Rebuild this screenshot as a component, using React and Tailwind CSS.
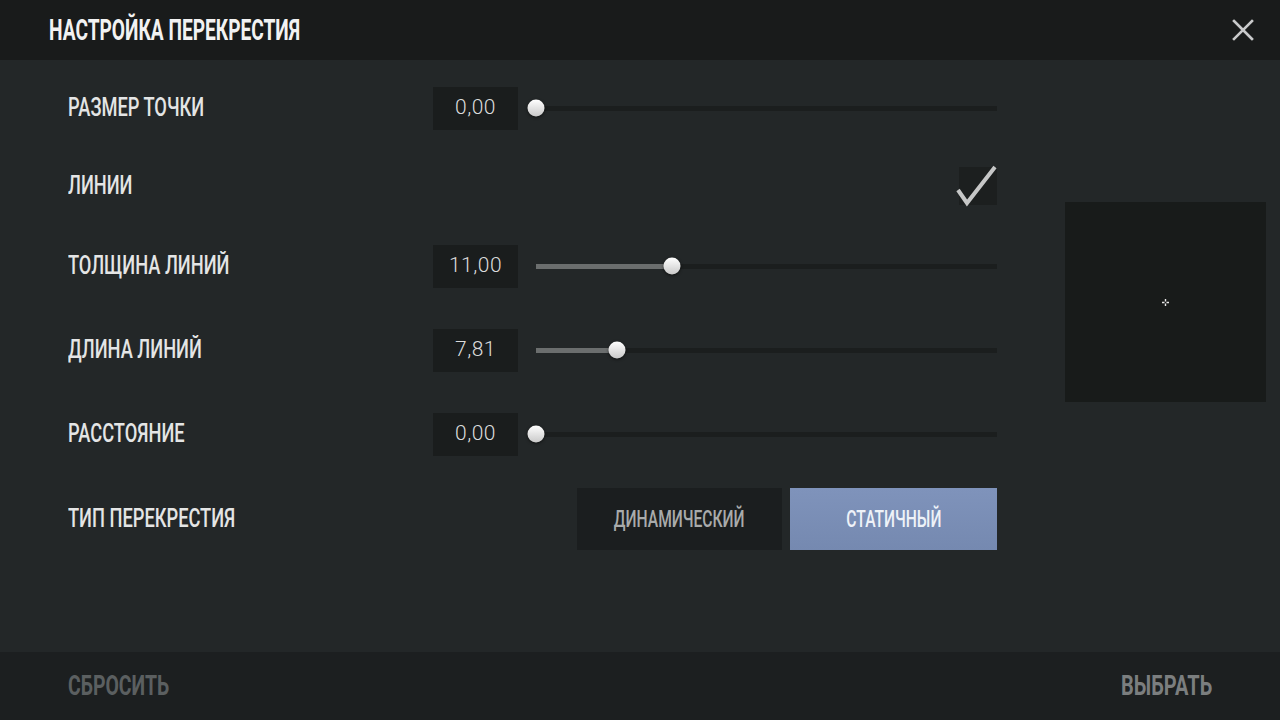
import React from 'react';

const condensed = { fontFamily: 'Roboto, "Liberation Sans", sans-serif' };
const digits = { fontFamily: 'Roboto, "DejaVu Sans", sans-serif' };

const Label = ({ children }) => (
  <span
    style={condensed}
    className="inline-block origin-left scale-x-[0.73] whitespace-nowrap text-[25px] font-medium leading-none text-[#e4e5e5]"
  >
    {children}
  </span>
);

const Slider = ({ value, percent }) => (
  <div className="flex items-center">
    <div
      style={digits}
      className="flex h-[43px] w-[85px] items-center justify-center bg-[#1a1d1d] text-[21px] font-light tracking-wide text-[#dcdcdc]"
    >
      {value}
    </div>
    <div className="relative ml-[18px] h-[5px] w-[461px] bg-[#1b1e1e]">
      <div className="h-full bg-[#6b6e6e]" style={{ width: `${percent}%` }} />
      <div
        className="absolute top-1/2 h-[17px] w-[17px] -translate-x-1/2 -translate-y-1/2 rounded-full bg-gradient-to-b from-white to-[#c9c9c9] shadow-[0_1px_3px_rgba(0,0,0,0.6)]"
        style={{ left: `${percent}%` }}
      />
    </div>
  </div>
);

const Row = ({ label, className, children }) => (
  <div className={`flex items-center ${className}`}>
    <div className="w-[365px]">
      <Label>{label}</Label>
    </div>
    <div className="flex flex-1 items-center">{children}</div>
  </div>
);

export default function App() {
  return (
    <div className="flex h-[720px] w-[1280px] flex-col overflow-hidden bg-[#232728]">
      {/* Header */}
      <div className="flex h-[60px] shrink-0 items-center justify-between bg-[#191b1b] pl-[49px] pr-[26px]">
        <span
          style={condensed}
          className="inline-block origin-left scale-x-[0.66] whitespace-nowrap text-[29px] font-bold leading-none text-[#f2f2f2]"
        >
          НАСТРОЙКА ПЕРЕКРЕСТИЯ
        </span>
        <svg width="22" height="22" viewBox="0 0 22 22">
          <path d="M2 2 L20 20 M20 2 L2 20" stroke="#c9cacb" strokeWidth="2.6" strokeLinecap="square" />
        </svg>
      </div>

      {/* Body */}
      <div className="flex flex-1">
        <div className="flex w-[997px] flex-col pl-[68px]">
          <Row label="РАЗМЕР ТОЧКИ" className="mt-[26px] h-[44px]">
            <Slider value="0,00" percent={0} />
          </Row>
          <Row label="ЛИНИИ" className="mt-[34px] h-[44px]">
            <div className="relative ml-auto h-[38px] w-[38px] bg-[#1c1f1f]">
              <svg className="absolute -right-[2px] -top-[6px]" width="44" height="46" viewBox="0 0 44 46">
                <path d="M3 29 L12 42 L40 6" fill="none" stroke="#c6c7c7" strokeWidth="4" strokeLinejoin="miter" />
              </svg>
            </div>
          </Row>
          <Row label="ТОЛЩИНА ЛИНИЙ" className="mt-[36px] h-[44px]">
            <Slider value="11,00" percent={29.5} />
          </Row>
          <Row label="ДЛИНА ЛИНИЙ" className="mt-[40px] h-[44px]">
            <Slider value="7,81" percent={17.6} />
          </Row>
          <Row label="РАССТОЯНИЕ" className="mt-[40px] h-[44px]">
            <Slider value="0,00" percent={0} />
          </Row>
          <Row label="ТИП ПЕРЕКРЕСТИЯ" className="mt-[32px] h-[62px]">
            <div className="ml-auto flex gap-[8px]">
              <div className="flex h-[62px] w-[205px] items-center justify-center bg-[#1b1e1f]">
                <span
                  style={condensed}
                  className="inline-block scale-x-[0.68] whitespace-nowrap text-[23px] font-medium leading-none text-[#a9abab]"
                >
                  ДИНАМИЧЕСКИЙ
                </span>
              </div>
              <div className="flex h-[62px] w-[207px] items-center justify-center bg-gradient-to-b from-[#7f93bb] to-[#7589b0]">
                <span
                  style={condensed}
                  className="inline-block scale-x-[0.68] whitespace-nowrap text-[23px] font-medium leading-none text-[#eef2f8]"
                >
                  СТАТИЧНЫЙ
                </span>
              </div>
            </div>
          </Row>
        </div>

        {/* Preview */}
        <div className="ml-[68px] mt-[142px] flex h-[200px] w-[201px] items-center justify-center bg-[#181b1a]">
          <svg width="7" height="7" viewBox="0 0 7 7">
            <path d="M3.5 0 V2.5 M3.5 4.5 V7 M0 3.5 H2.5 M4.5 3.5 H7" stroke="#e8e8e8" strokeWidth="1.4" />
          </svg>
        </div>
      </div>

      {/* Footer */}
      <div className="flex h-[68px] shrink-0 items-center justify-between bg-[#1c1f20] pl-[68px] pr-[68px]">
        <span
          style={condensed}
          className="inline-block origin-left scale-x-[0.72] whitespace-nowrap text-[27px] font-bold leading-none text-[#5b5f60]"
        >
          СБРОСИТЬ
        </span>
        <span
          style={condensed}
          className="inline-block origin-right scale-x-[0.74] whitespace-nowrap text-[27px] font-bold leading-none text-[#7b7e7f]"
        >
          ВЫБРАТЬ
        </span>
      </div>
    </div>
  );
}
